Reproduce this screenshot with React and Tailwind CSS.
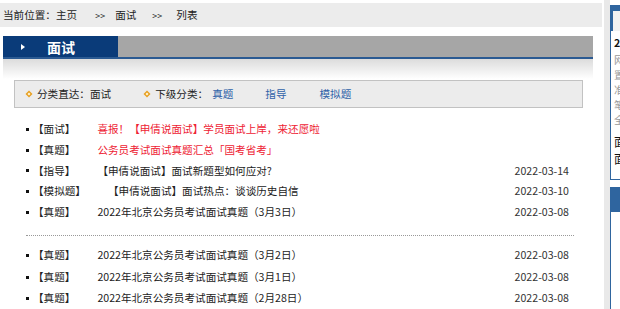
import React from "react";

const rowsTop = [
    { cat: "【面试】", title: "喜报！【申倩说面试】学员面试上岸，来还愿啦", red: true, date: "" },
    { cat: "【真题】", title: "公务员考试面试真题汇总「国考省考」", red: true, date: "" },
    { cat: "【指导】", title: "【申倩说面试】面试新题型如何应对?", red: false, date: "2022-03-14" },
    { cat: "【模拟题】", title: "【申倩说面试】面试热点：谈谈历史自信", red: false, date: "2022-03-10" },
    { cat: "【真题】", title: "2022年北京公务员考试面试真题（3月3日）", red: false, date: "2022-03-08" },
];

const rowsBottom = [
    { cat: "【真题】", title: "2022年北京公务员考试面试真题（3月2日）", date: "2022-03-08" },
    { cat: "【真题】", title: "2022年北京公务员考试面试真题（3月1日）", date: "2022-03-08" },
    { cat: "【真题】", title: "2022年北京公务员考试面试真题（2月28日）", date: "2022-03-08" },
];

function Diamond() {
    return (
        <svg width="8" height="8" viewBox="0 0 8 8" className="shrink-0">
            <path d="M4 0.5 L7.5 4 L4 7.5 L0.5 4 Z" fill="#e8a020" />
            <path d="M4 2.5 L5.5 4 L4 5.5 L2.5 4 Z" fill="#fff6d8" />
        </svg>
    );
}

function Row({ row, h }) {
    return (
        <div className={`flex items-center ${h}`}>
            <span className="w-[3px] h-[3px] bg-[#111] shrink-0" />
            <span className="ml-[4px] text-[#222]">{row.cat}</span>
            <span className={`ml-[22px] ${row.red ? "text-[#ee2233]" : "text-[#222]"}`}>{row.title}</span>
            <span className="ml-auto pr-[5px] text-[#333]">{row.date}</span>
        </div>
    );
}

export default function App() {
    return (
        <div
            className="flex w-[620px] h-[309px] overflow-hidden bg-white text-[10.6px] leading-none"
            style={{ fontFamily: '"Noto Sans CJK SC", "Noto Sans", sans-serif' }}
        >
            {/* main column */}
            <div className="w-[604px] shrink-0 pt-[3px]">
                {/* breadcrumb */}
                <div className="w-[602px] h-[24px] bg-[#ececec] flex items-center pl-[3px] text-[#222]">
                    <span>当前位置：主页</span>
                    <span className="ml-[18px] text-[9px]">&gt;&gt;</span>
                    <span className="ml-[10px]">面试</span>
                    <span className="ml-[16px] text-[9px]">&gt;&gt;</span>
                    <span className="ml-[14px]">列表</span>
                </div>

                {/* title bar */}
                <div className="ml-[3px] mt-[9px] w-[590px]">
                    <div className="flex h-[21px]">
                        <div className="w-[115px] bg-[#0a3b79] flex items-center">
                            <span className="ml-[18px] w-0 h-0 border-y-[3px] border-y-transparent border-l-[4px] border-l-white" />
                            <span className="ml-[22px] text-white font-bold text-[14px]">面试</span>
                        </div>
                        <div className="flex-1 bg-[#a6a6a6]" />
                    </div>
                    <div className="h-[2px] bg-[#2b5a92]" />
                    <div className="h-[20px] bg-gradient-to-b from-[#dcdcdc] to-white" />
                </div>

                {/* category box */}
                <div className="ml-[14px] mt-[1px] w-[569px] h-[28px] bg-[#ececec] border border-[#c2c2c2] flex items-center pl-[10px] text-[#222]">
                    <Diamond />
                    <span className="ml-[4px]">分类直达：面试</span>
                    <span className="ml-[32px]"><Diamond /></span>
                    <span className="ml-[4px]">下级分类：</span>
                    <span className="ml-[4px] text-[#2f62a8]">真题</span>
                    <span className="ml-[32px] text-[#2f62a8]">指导</span>
                    <span className="ml-[33px] text-[#2f62a8]">模拟题</span>
                </div>

                {/* list */}
                <div className="ml-[26px] mt-[11px] w-[548px]">
                    {rowsTop.map((r, i) => (
                        <Row key={i} row={r} h="h-[20.75px]" />
                    ))}
                    <div className="mt-[12px] border-t border-dotted border-[#999]" />
                    <div className="mt-[9px]">
                        {rowsBottom.map((r, i) => (
                            <Row key={i} row={r} h="h-[21.5px]" />
                        ))}
                    </div>
                </div>
            </div>

            {/* gutter */}
            <div className="w-[6px] shrink-0 bg-[#e9e9e9]" />

            {/* side column */}
            <div className="w-[200px] shrink-0 pt-[5px]">
                <div className="h-[175px] border border-[#2f659f]">
                    <div className="h-[25px] bg-[#2f659f] pl-[2px] pt-[5px]">
                        <div className="h-full bg-[#f2f2f2]" />
                    </div>
                    <div className="pl-[3px] pt-[5px]">
                        <div className="h-[14px] flex items-center font-bold text-[#111]">2022年北京公务员考试</div>
                        <div className="mt-[3px] text-[#999]">
                            <div className="h-[15px] flex items-center">网上报名时间安排</div>
                            <div className="h-[15px] flex items-center">置顶公告信息发布</div>
                            <div className="h-[15px] flex items-center">准考证打印入口</div>
                            <div className="h-[15px] flex items-center">笔试成绩查询</div>
                            <div className="h-[15px] flex items-center">全部招录信息</div>
                        </div>
                        <div className="mt-[5px] text-[#111] text-[12px]">
                            <div className="h-[17px] flex items-center">面试热点汇总</div>
                            <div className="h-[17px] flex items-center">面试真题汇总</div>
                        </div>
                    </div>
                </div>
                <div className="mt-[7px] h-[25px] bg-[#2f659f]" />
                <div className="h-[120px] border-l border-[#2f659f]" />
            </div>
        </div>
    );
}
